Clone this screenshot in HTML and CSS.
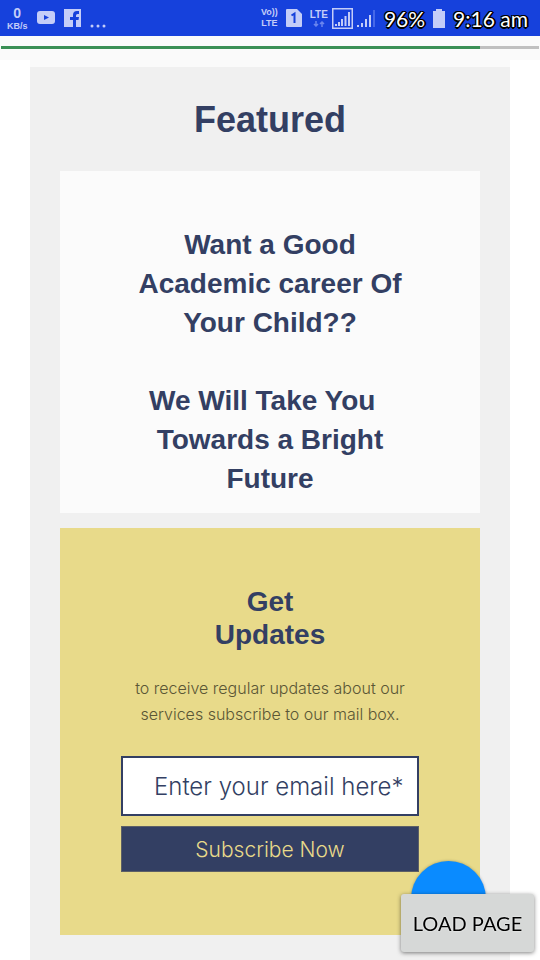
FILE: index.html
```
<!DOCTYPE html>
<html lang="en">
<head>
    <meta charset="UTF-8">
    <meta name="viewport" content="width=device-width, initial-scale=1.0">
    <title>Featured</title>
    <link rel="stylesheet" href="styles.css">
</head>
<body>
    <header class="status-bar">
        <div class="status-left">
            <div class="speed"><span class="speed-value">0</span><span class="speed-unit">KB/s</span></div>
            <svg class="icon" width="18" height="14" viewBox="0 0 18 14">
                <rect width="18" height="13" rx="3" fill="#c4cdf8"/>
                <path d="M7 4 L12 6.500 L7 9 Z" fill="#1641dc"/>
            </svg>
            <svg class="icon" width="17" height="18" viewBox="0 0 17 18">
                <rect width="17" height="18" fill="#c4cdf8"/>
                <path d="M9 18 V11 H6 V8 H9 V6 Q9 2 13 2 H15 V5 H13.500 Q12 5 12 6.500 V8 H15 L14.500 11 H12 V18 Z" fill="#1641dc"/>
            </svg>
            <svg class="icon dots" width="16" height="4" viewBox="0 0 16 4" fill="#c4cdf8">
                <circle cx="2" cy="2" r="1.500"/><circle cx="8" cy="2" r="1.500"/><circle cx="14" cy="2" r="1.500"/>
            </svg>
        </div>
        <div class="status-right">
            <div class="volte"><span>Vo))</span><span>LTE</span></div>
            <svg class="icon" width="16" height="18" viewBox="0 0 16 18">
                <path d="M1 0 H11 L16 5 V17 Q16 18 15 18 H1 Q0 18 0 17 V1 Q0 0 1 0 Z" fill="#c4cdf8"/>
                <path d="M5.500 6.500 L8.500 4.500 V14" fill="none" stroke="#1641dc" stroke-width="2"/>
            </svg>
            <div class="signal">
                <div class="lte">
                    <span>LTE</span>
                    <svg width="12" height="6" viewBox="0 0 12 6" fill="none" stroke="#6a85ee" stroke-width="1.500">
                        <path d="M3 0 V5 M1 3 L3 5 L5 3 M9 6 V1 M7 3 L9 1 L11 3"/>
                    </svg>
                </div>
                <svg class="icon" width="44" height="21" viewBox="0 0 44 21">
                    <rect x="0.750" y="0.750" width="19.500" height="19.500" fill="none" stroke="#c4cdf8" stroke-width="1.500"/>
                    <path d="M4 18 V16 M7 18 V14 M10 18 V11 M13.500 18 V8 M17 18 V4" stroke="#c4cdf8" stroke-width="2"/>
                    <path d="M26 19 V17 M30 19 V15 M34 19 V11 M38 19 V7" stroke="#c4cdf8" stroke-width="2"/>
                    <path d="M42 19 V2" stroke="#4668e8" stroke-width="2"/>
                </svg>
            </div>
            <span class="outlined percent">96%</span>
            <svg class="icon" width="12" height="19" viewBox="0 0 12 19">
                <path d="M3 0 H9 V2 H12 V19 H0 V2 H3 Z" fill="#c4cdf8"/>
            </svg>
            <span class="outlined">9:16 am</span>
        </div>
    </header>
    <div class="loading">
        <progress class="progress" value="89" max="100" aria-label="Page loading"></progress>
    </div>

    <main class="page">
        <section class="featured">
            <h1 class="title">Featured</h1>
            <div class="card">
                <h2 class="heading">Want a Good<br>Academic career Of<br>Your Child??</h2>
                <h2 class="heading">We Will Take You&nbsp;&nbsp;<br>Towards a Bright<br>Future</h2>
            </div>
            <form class="card updates">
                <h2 class="updates-title">Get<br>Updates</h2>
                <p class="updates-text">to receive regular updates about our<br>services subscribe to our mail box.</p>
                <input class="email" type="email" placeholder="Enter your email here*" aria-label="Enter your email here">
                <button class="subscribe" type="submit">Subscribe Now</button>
            </form>
        </section>
    </main>

    <div class="chat"></div>
    <button class="load-page" type="button">LOAD PAGE</button>
</body>
</html>
```
FILE: styles.css
```
* {
    box-sizing: border-box;
}
body {
    margin: 0;
    height: 100vh;
    overflow: hidden;
    display: flex;
    flex-direction: column;
    background-color: #fff;
    color: #333f63;
    font-family: "Liberation Sans", Arial, sans-serif;
}
h1, h2, p {
    margin: 0;
}

/* status bar */
.status-bar {
    display: flex;
    justify-content: space-between;
    flex-shrink: 0;
    height: 36px;
    padding: 0 12px 0 7px;
    background-color: #1641dc;
    color: #c4cdf8;
}
.status-left,
.status-right,
.signal {
    display: flex;
    align-items: center;
}
.status-left {
    gap: 9px;
}
.status-right {
    gap: 8px;
}
.signal {
    gap: 4px;
}
.icon {
    flex-shrink: 0;
}
.dots {
    margin-top: 15px;
}
.speed,
.volte,
.lte {
    display: flex;
    flex-direction: column;
    align-items: center;
    font-weight: bold;
}
.speed-value {
    font-size: 14px;
    line-height: 16px;
}
.speed-unit {
    font-size: 9px;
    line-height: 10px;
}
.volte {
    font-size: 9px;
    line-height: 11px;
}
.lte {
    font-size: 10px;
    line-height: 11px;
    gap: 1px;
}
.outlined {
    font-family: Lato, sans-serif;
    font-size: 21px;
    color: #fff;
    text-shadow: -1px -1px 0 #000, 1px -1px 0 #000, -1px 1px 0 #000, 1px 1px 0 #000, 0 2px 0 #000, 2px 0 0 #000;
}

.loading {
    flex-shrink: 0;
    height: 24px;
    padding: 10px 1px 0;
    background-color: #fafafa;
}
.progress {
    display: block;
    width: 100%;
    height: 3px;
    border: none;
    appearance: none;
}
.progress::-webkit-progress-bar {
    background-color: #c0c0c0;
}
.progress::-webkit-progress-value {
    background-color: #3a8f55;
}

/* content */
.page {
    flex: 1;
    display: flex;
    margin: 0 30px;
    border-top: 7px solid #fafafa;
}
.featured {
    flex: 1;
    padding: 33px 30px;
    background-color: #f0f0f0;
    text-align: center;
}
.title {
    margin-bottom: 31px;
    font-size: 36px;
    line-height: 40px;
}
.card {
    margin-bottom: 15px;
    padding: 54px 60px 15px;
    background-color: #fbfbfb;
}
.heading {
    font-size: 28px;
    line-height: 39px;
}
.heading + .heading {
    margin-top: 39px;
}
.updates {
    padding: 57px 61px 63px;
    background-color: #e8da8a;
}
.updates-title {
    font-size: 28px;
    line-height: 33px;
}
.updates-text {
    margin: 24px 0 29px;
    font-family: Inter, sans-serif;
    font-weight: 300;
    font-size: 16px;
    line-height: 26px;
    color: #5a5635;
    white-space: nowrap;
}
.email,
.subscribe {
    display: block;
    width: 100%;
    border-radius: 0;
    font-family: Inter, sans-serif;
    font-weight: 300;
}
.email {
    height: 60px;
    margin-bottom: 10px;
    padding: 0 0 0 31px;
    border: 2px solid #333f63;
    background-color: #fff;
    font-size: 24px;
}
.email::placeholder {
    color: #333f63;
    opacity: 1;
}
.subscribe {
    height: 46px;
    padding: 0;
    border: 1px solid #5c5f66;
    background-color: #333f63;
    color: #e8da8a;
    font-size: 21px;
}

/* floating controls */
.chat {
    position: fixed;
    right: 54px;
    bottom: 24px;
    width: 75px;
    height: 75px;
    border-radius: 50%;
    background-color: #0a8bff;
    box-shadow: 0 0 3px rgba(0, 0, 0, 0.3);
}
.load-page {
    position: fixed;
    right: 6px;
    bottom: 8px;
    width: 133px;
    height: 58px;
    padding: 0;
    border: none;
    border-radius: 3px;
    background-color: #d6d8d7;
    box-shadow: 0 1px 4px rgba(0, 0, 0, 0.5);
    color: #000;
    font-family: Lato, sans-serif;
    font-size: 20px;
    text-shadow: 0 0 2px #fff;
}
```
